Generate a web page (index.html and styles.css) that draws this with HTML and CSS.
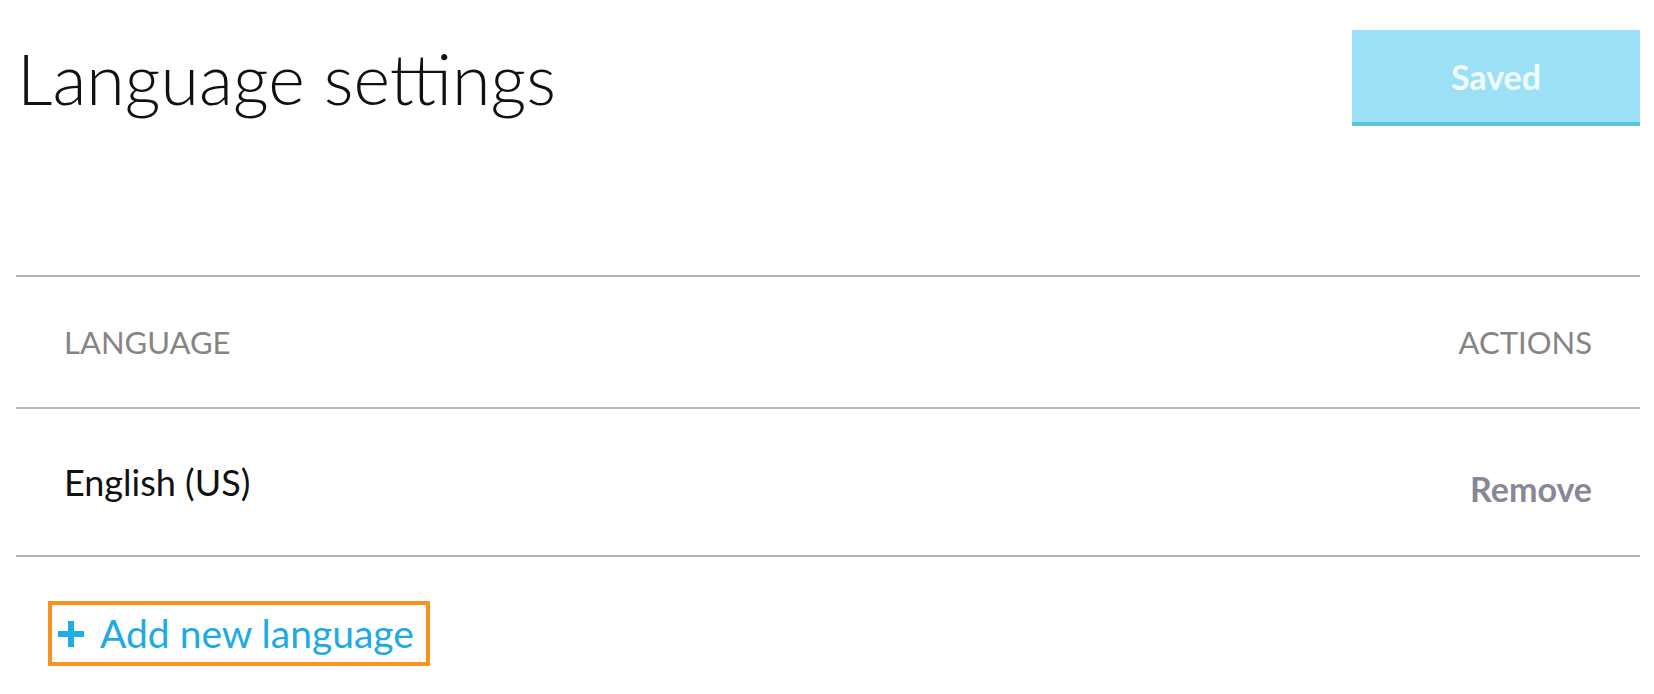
FILE: index.html
```html
<!DOCTYPE html>
<html lang="en">
<head>
<meta charset="utf-8">
<title>Language settings</title>
<link rel="stylesheet" href="styles.css">
</head>
<body>
<div class="page">
  <header class="header">
    <h1 class="title">Language settings</h1>
    <button class="saved-btn" type="button">Saved</button>
  </header>

  <div class="table">
    <div class="row head-row">
      <span class="col-head">LANGUAGE</span>
      <span class="col-head">ACTIONS</span>
    </div>
    <div class="row data-row">
      <span class="lang-name">English (US)</span>
      <span class="remove">Remove</span>
    </div>
  </div>

  <div class="add-wrap">
    <a class="add-link" href="#">
      <svg class="plus" width="26" height="26" viewBox="0 0 26 26" aria-hidden="true">
        <rect x="10" y="0" width="6" height="26" fill="currentColor"/>
        <rect x="0" y="10" width="26" height="6" fill="currentColor"/>
      </svg>
      <span class="add-text">Add new language</span>
    </a>
  </div>
</div>
</body>
</html>
```

FILE: styles.css
```css
* { box-sizing: border-box; }

html, body {
  margin: 0;
  padding: 0;
  background: #ffffff;
}

body {
  font-family: Lato, "Open Sans", "Liberation Sans", sans-serif;
  color: #111111;
}

.page {
  padding: 30px 14px 0 16px;
}

.header {
  display: flex;
  justify-content: space-between;
  align-items: flex-start;
  height: 245px;
}

.title {
  margin: 13px 0 0 1px;
  font-size: 70px;
  line-height: 70px;
  font-weight: 300;
  color: #111111;
  letter-spacing: 0;
}

.saved-btn {
  width: 288px;
  height: 96px;
  border: 0;
  border-bottom: 4px solid #5cc2e0;
  background: #9ce0f6;
  color: #f2fbff;
  font-family: Lato, "Open Sans", sans-serif;
  font-size: 34px;
  font-weight: 700;
  padding: 0;
  margin: 0;
}

.table {
  border-top: 2px solid #b5b5bd;
}

.row {
  display: flex;
  justify-content: space-between;
  align-items: center;
  padding: 0 48px 0 48px;
  border-bottom: 2px solid #b5b5bd;
}

.head-row {
  height: 132px;
}

.data-row {
  height: 148px;
}

.col-head {
  font-size: 31px;
  font-weight: 400;
  color: #858585;
}

.lang-name {
  font-size: 36px;
  font-weight: 400;
  color: #111111;
}

.remove {
  margin-top: 13px;
  font-size: 34px;
  font-weight: 700;
  color: #878796;
}

.add-wrap {
  padding: 44px 0 0 32px;
}

.add-link {
  display: inline-flex;
  align-items: center;
  width: 382px;
  height: 65px;
  border: 4px solid #f7931e;
  padding: 0 0 0 6px;
  color: #1eabe3;
  text-decoration: none;
}

.plus {
  flex: none;
  color: #1eaee6;
}

.add-text {
  margin-left: 16px;
  font-size: 39px;
  font-weight: 400;
  line-height: 1;
}
```
